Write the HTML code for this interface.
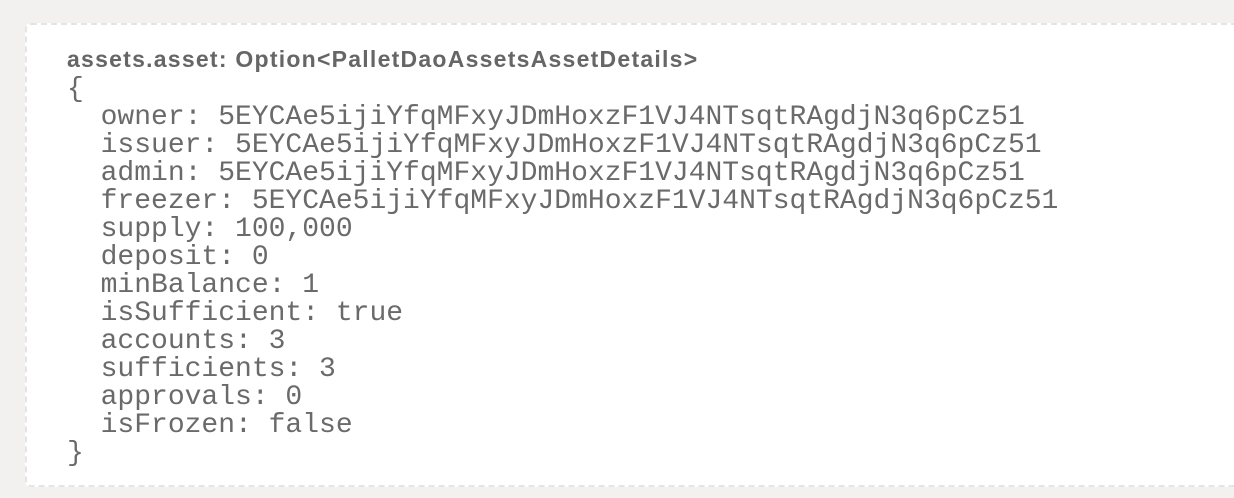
<!DOCTYPE html>
<html><head><meta charset="utf-8"><style>
html,body{margin:0;padding:0;}
body{width:1234px;height:498px;background:#f2f1f0;position:relative;overflow:hidden;}
.card{position:absolute;left:25px;top:23px;width:1240px;height:464px;background:#fff;border:2px dashed #e6e5e4;border-radius:6px;box-sizing:border-box;}
.t{position:absolute;left:67px;top:45px;font-weight:bold;font-size:23px;font-family:"Liberation Sans",sans-serif;letter-spacing:1.25px;color:#666;white-space:pre;line-height:28px;}
pre{position:absolute;left:67px;top:76px;margin:0;font:28px/28px "Liberation Mono",monospace;color:#6a6a6a;letter-spacing:0;}
</style></head><body>
<div class="card"></div>
<div class="t">assets.asset: Option&lt;PalletDaoAssetsAssetDetails&gt;</div>
<pre>{
  owner: 5EYCAe5ijiYfqMFxyJDmHoxzF1VJ4NTsqtRAgdjN3q6pCz51
  issuer: 5EYCAe5ijiYfqMFxyJDmHoxzF1VJ4NTsqtRAgdjN3q6pCz51
  admin: 5EYCAe5ijiYfqMFxyJDmHoxzF1VJ4NTsqtRAgdjN3q6pCz51
  freezer: 5EYCAe5ijiYfqMFxyJDmHoxzF1VJ4NTsqtRAgdjN3q6pCz51
  supply: 100,000
  deposit: 0
  minBalance: 1
  isSufficient: true
  accounts: 3
  sufficients: 3
  approvals: 0
  isFrozen: false
}</pre>
</body></html>
